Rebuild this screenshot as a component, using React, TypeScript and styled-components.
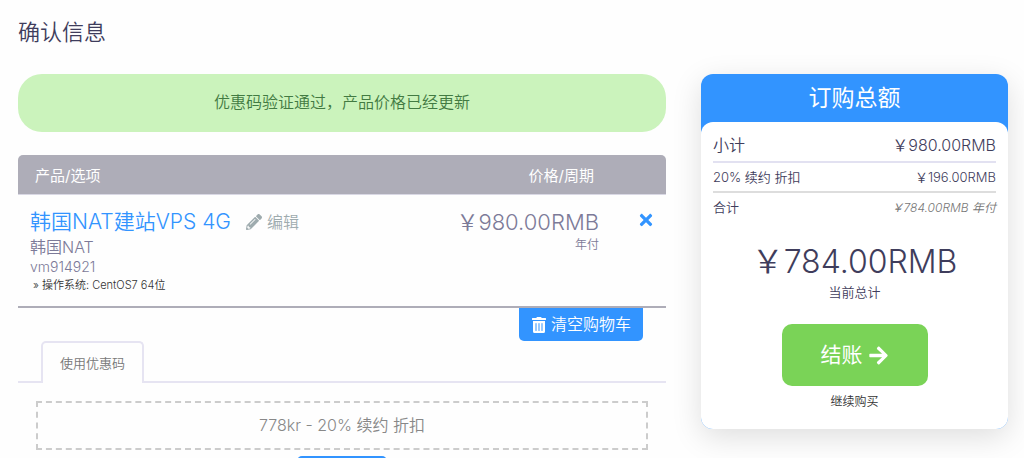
import React from "react";
import styled, { createGlobalStyle } from "styled-components";
import { FaArrowRight, FaPencilAlt, FaTimes, FaTrashAlt } from "react-icons/fa";

const blue = "#3294ff";
const ink = "#3f3d5c";
const muted = "#7c7a98";

const GlobalStyle = createGlobalStyle`
  *, *::before, *::after { box-sizing: border-box; }
  body {
    margin: 0;
    overflow: hidden;
    background: #fefefe;
    color: ${ink};
    font-family: Inter, "Noto Sans CJK SC", sans-serif;
    font-weight: 350;
    font-size: 16px;
  }
  button, a { font: inherit; }
`;

const Page = styled.div`
  height: 100vh;
  overflow: hidden;
  padding: 16px 16px 0 18px;
`;

const PageTitle = styled.h1`
  margin: 0 0 26px;
  font-size: 22px;
  font-weight: 350;
  line-height: 32px;
`;

const Columns = styled.div`
  display: grid;
  grid-template-columns: minmax(0, 648fr) minmax(0, 307fr);
  gap: 35px;
  align-items: start;
`;

const Notice = styled.div`
  margin-bottom: 23px;
  padding: 15px 16px 17px;
  border-radius: 24px;
  background: #cbf3bc;
  color: #427a42;
  line-height: 26px;
  text-align: center;
`;

const CartTable = styled.table`
  width: 100%;
  border-collapse: separate;
  border-spacing: 0;
  border-bottom: 2px solid #aeadb8;
`;

const HeadCell = styled.th<{ $align?: "left" | "right" }>`
  height: 40px;
  padding: 0 5px 0 17px;
  border-bottom: 1px solid #d9d8e4;
  background: #aeadb8;
  color: #fff;
  font-size: 15px;
  font-weight: 400;
  text-align: ${(p) => p.$align ?? "left"};
  &:first-child { border-top-left-radius: 5px; }
  &:last-child { border-top-right-radius: 5px; width: 67px; }
`;

const Cell = styled.td<{ $align?: "left" | "right" | "center" }>`
  padding: 13px 0 12px 12px;
  color: ${muted};
  text-align: ${(p) => p.$align ?? "left"};
  vertical-align: top;
  &:last-child { padding-left: 26px; }
`;

const ProductLine = styled.div`
  display: flex;
  align-items: center;
  gap: 15px;
  line-height: 28px;
`;

const ProductName = styled.span`
  color: ${blue};
  font-size: 21px;
`;

const EditLink = styled.a`
  display: flex;
  align-items: center;
  gap: 5px;
  color: #9eabae;
  text-decoration: none;
`;

const Group = styled.div`
  line-height: 22px;
`;

const Domain = styled.div`
  font-size: 14px;
  line-height: 18px;
`;

const Option = styled.div`
  padding-left: 3px;
  color: #333;
  font-size: 11px;
  line-height: 18px;
`;

const Price = styled.div`
  font-size: 22px;
  line-height: 28px;
`;

const Cycle = styled.div`
  font-size: 12px;
  line-height: 18px;
`;

const RemoveButton = styled.button`
  display: inline-flex;
  margin-top: 3px;
  padding: 0;
  border: 0;
  background: none;
  color: ${blue};
  font-size: 18px;
`;

const CartActions = styled.div`
  display: flex;
  justify-content: flex-end;
  padding-right: 23px;
`;

const ClearButton = styled.button`
  display: flex;
  align-items: center;
  gap: 4px;
  padding: 0 12px;
  border: 0;
  border-radius: 0 0 5px 5px;
  background: ${blue};
  color: #fff;
  line-height: 33px;
`;

const Tabs = styled.div`
  display: flex;
  padding-left: 23px;
  border-bottom: 2px solid #e6e4f2;
`;

const Tab = styled.button`
  height: 42px;
  margin-bottom: -2px;
  padding: 0 17px 2px;
  border: 2px solid #e6e4f2;
  border-bottom: 0;
  border-radius: 5px 5px 0 0;
  background: #fefefe;
  color: #777;
  font-size: 13px;
`;

const CouponPanel = styled.div`
  display: flex;
  flex-direction: column;
  align-items: center;
  gap: 6px;
  padding: 18px 18px 0;
`;

const Coupon = styled.div`
  align-self: stretch;
  padding: 10px;
  border: 2px dashed #ccc;
  color: #888;
  line-height: 25px;
  text-align: center;
`;

const RemoveCoupon = styled.button`
  width: 90px;
  height: 32px;
  border: 0;
  border-radius: 5px;
  background: ${blue};
`;

const Summary = styled.aside`
  border-radius: 12px;
  background: ${blue};
  box-shadow: 0 8px 30px rgba(0, 0, 0, 0.13);
`;

const SummaryTitle = styled.h2`
  margin: 0;
  color: #fff;
  font-size: 23px;
  font-weight: 400;
  line-height: 48px;
  text-align: center;
`;

const SummaryBody = styled.div`
  padding: 6px 12px 17px;
  border-radius: 12px;
  background: #fff;
  text-align: center;
`;

const SummaryRow = styled.div<{ $size: number; $line?: string }>`
  display: flex;
  justify-content: space-between;
  padding-top: 1px;
  border-bottom: 2px solid ${(p) => p.$line ?? "transparent"};
  font-size: ${(p) => p.$size}px;
  line-height: ${(p) => (p.$size > 13 ? 32 : 27)}px;
`;

const Recurring = styled.em`
  color: #777;
  font-size: 12px;
`;

const Total = styled.div`
  margin-top: 19px;
  font-size: 32px;
  line-height: 40px;
`;

const TotalLabel = styled.div`
  font-size: 13px;
  line-height: 20px;
`;

const CheckoutButton = styled.button`
  display: flex;
  align-items: center;
  gap: 5px;
  margin: 22px auto 6px;
  padding: 0 39px;
  border: 0;
  border-radius: 10px;
  background: #7ad357;
  color: #fff;
  font-size: 21px;
  font-weight: 400;
  line-height: 62px;
`;

const ContinueLink = styled.a`
  display: block;
  color: #333;
  font-size: 12px;
  line-height: 20px;
  text-decoration: none;
`;

export default function App() {
  return (
    <Page>
      <GlobalStyle />
      <PageTitle>确认信息</PageTitle>
      <Columns>
        <main>
          <Notice role="status">优惠码验证通过，产品价格已经更新</Notice>
          <CartTable>
            <thead>
              <tr>
                <HeadCell scope="col">产品/选项</HeadCell>
                <HeadCell scope="col" $align="right">价格/周期</HeadCell>
                <HeadCell aria-hidden="true" />
              </tr>
            </thead>
            <tbody>
              <tr>
                <Cell>
                  <ProductLine>
                    <ProductName>韩国NAT建站VPS 4G</ProductName>
                    <EditLink href="#edit"><FaPencilAlt />编辑</EditLink>
                  </ProductLine>
                  <Group>韩国NAT</Group>
                  <Domain>vm914921</Domain>
                  <Option>» 操作系统: CentOS7 64位</Option>
                </Cell>
                <Cell $align="right">
                  <Price>￥980.00RMB</Price>
                  <Cycle>年付</Cycle>
                </Cell>
                <Cell $align="center">
                  <RemoveButton type="button" aria-label="删除"><FaTimes /></RemoveButton>
                </Cell>
              </tr>
            </tbody>
          </CartTable>
          <CartActions>
            <ClearButton type="button"><FaTrashAlt />清空购物车</ClearButton>
          </CartActions>
          <Tabs role="tablist">
            <Tab type="button" role="tab" aria-selected="true">使用优惠码</Tab>
          </Tabs>
          <CouponPanel>
            <Coupon>778kr - 20% 续约 折扣</Coupon>
            <RemoveCoupon type="button" aria-label="移除优惠码" />
          </CouponPanel>
        </main>
        <Summary>
          <SummaryTitle>订购总额</SummaryTitle>
          <SummaryBody>
            <SummaryRow $size={16} $line="#e2e1f1"><span>小计</span><span>￥980.00RMB</span></SummaryRow>
            <SummaryRow $size={13} $line="#ddd"><span>20% 续约 折扣</span><span>￥196.00RMB</span></SummaryRow>
            <SummaryRow $size={13}><span>合计</span><Recurring>￥784.00RMB 年付</Recurring></SummaryRow>
            <Total>￥784.00RMB</Total>
            <TotalLabel>当前总计</TotalLabel>
            <CheckoutButton type="button">结账<FaArrowRight /></CheckoutButton>
            <ContinueLink href="#shop">继续购买</ContinueLink>
          </SummaryBody>
        </Summary>
      </Columns>
    </Page>
  );
}
